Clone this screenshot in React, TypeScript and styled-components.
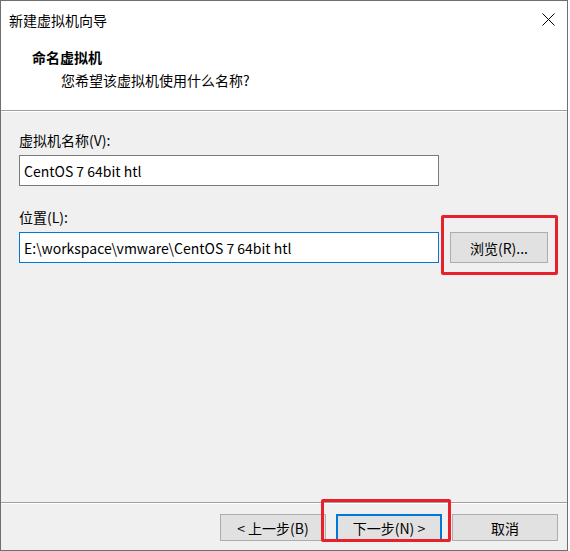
import React from "react";
import styled, { createGlobalStyle } from "styled-components";

const GlobalStyle = createGlobalStyle`
  html, body {
    margin: 0;
    padding: 0;
    background: #ffffff;
  }
  * {
    box-sizing: border-box;
  }
`;

const FONT = `"Noto Sans CJK SC", "Noto Sans", sans-serif`;

const Window = styled.div`
  width: 568px;
  height: 551px;
  border: 1px solid #6f6f6f;
  display: flex;
  flex-direction: column;
  background: #f0f0f0;
  font-family: ${FONT};
  font-size: 14px;
  color: #000;
`;

const TitleBar = styled.div`
  height: 38px;
  flex: none;
  background: #ffffff;
  display: flex;
  align-items: center;
  justify-content: space-between;
  padding: 0 12px 0 8px;
  line-height: 20px;
`;

const CloseButton = styled.div`
  width: 14px;
  height: 14px;
  display: flex;
  align-items: center;
  justify-content: center;
  margin-top: -1px;
`;

const Header = styled.div`
  height: 71px;
  flex: none;
  background: #ffffff;
  padding: 8px 0 0 31px;
  display: flex;
  flex-direction: column;
  gap: 3px;
`;

const HeaderTitle = styled.div`
  font-weight: 700;
  line-height: 20px;
`;

const HeaderSubtitle = styled.div`
  line-height: 20px;
  padding-left: 29px;
`;

const Separator = styled.div`
  height: 2px;
  flex: none;
  border-top: 1px solid #a0a0a0;
  border-bottom: 1px solid #ffffff;
`;

const Content = styled.div`
  flex: 1;
  padding: 18px 0 0 18px;
  display: flex;
  flex-direction: column;
`;

const FieldLabel = styled.div<{ $gapTop?: number }>`
  line-height: 20px;
  margin-top: ${(p) => p.$gapTop ?? 0}px;
  margin-bottom: 5px;
`;

const FieldRow = styled.div`
  display: flex;
  align-items: flex-start;
  gap: 11px;
`;

const TextBox = styled.div<{ $focused?: boolean }>`
  width: 420px;
  height: 31px;
  background: #ffffff;
  border: 1px solid ${(p) => (p.$focused ? "#0078d7" : "#7a7a7a")};
  padding: 0 4px;
  display: flex;
  align-items: center;
  white-space: nowrap;
  line-height: 20px;
`;

const Highlight = styled.div`
  position: relative;
  display: flex;
`;

const Marker = styled.div<{ $t: number; $r: number; $b: number; $l: number }>`
  position: absolute;
  top: ${(p) => p.$t}px;
  right: ${(p) => p.$r}px;
  bottom: ${(p) => p.$b}px;
  left: ${(p) => p.$l}px;
  border: 3px solid #e8202a;
  border-radius: 2px;
  pointer-events: none;
`;

const PushButton = styled.button<{ $default?: boolean; $w: number; $h: number }>`
  width: ${(p) => p.$w}px;
  height: ${(p) => p.$h}px;
  margin: 0;
  padding: 0;
  background: #e1e1e1;
  border: ${(p) => (p.$default ? "2px solid #0078d7" : "1px solid #adadad")};
  font-family: ${FONT};
  font-size: 14px;
  color: #000;
  line-height: 20px;
  display: flex;
  align-items: center;
  justify-content: center;
  white-space: pre;
`;

const Footer = styled.div`
  height: 46px;
  flex: none;
  padding: 10px 9px 0 0;
  display: flex;
  justify-content: flex-end;
  align-items: flex-start;
  gap: 10px;
`;

export default function App() {
  return (
    <>
      <GlobalStyle />
      <Window>
        <TitleBar>
          <span>新建虚拟机向导</span>
          <CloseButton>
            <svg width="13" height="13" viewBox="0 0 13 13">
              <path d="M0.5 0.5 L12.5 12.5 M12.5 0.5 L0.5 12.5" stroke="#000" strokeWidth="1" fill="none" />
            </svg>
          </CloseButton>
        </TitleBar>
        <Header>
          <HeaderTitle>命名虚拟机</HeaderTitle>
          <HeaderSubtitle>您希望该虚拟机使用什么名称?</HeaderSubtitle>
        </Header>
        <Separator />
        <Content>
          <FieldLabel>虚拟机名称(V):</FieldLabel>
          <FieldRow>
            <TextBox>CentOS 7 64bit htl</TextBox>
          </FieldRow>
          <FieldLabel $gapTop={21}>位置(L):</FieldLabel>
          <FieldRow>
            <TextBox $focused>E:\workspace\vmware\CentOS 7 64bit htl</TextBox>
            <Highlight>
              <PushButton $w={98} $h={31}>浏览(R)...</PushButton>
              <Marker $t={-17} $r={-10} $b={-12} $l={-9} />
            </Highlight>
          </FieldRow>
        </Content>
        <Separator />
        <Footer>
          <PushButton $w={106} $h={27}>{"< 上一步(B)"}</PushButton>
          <Highlight>
            <PushButton $w={106} $h={27} $default>{"下一步(N) >"}</PushButton>
            <Marker $t={-15} $r={-9} $b={-1} $l={-15} />
          </Highlight>
          <PushButton $w={106} $h={27}>取消</PushButton>
        </Footer>
      </Window>
    </>
  );
}
